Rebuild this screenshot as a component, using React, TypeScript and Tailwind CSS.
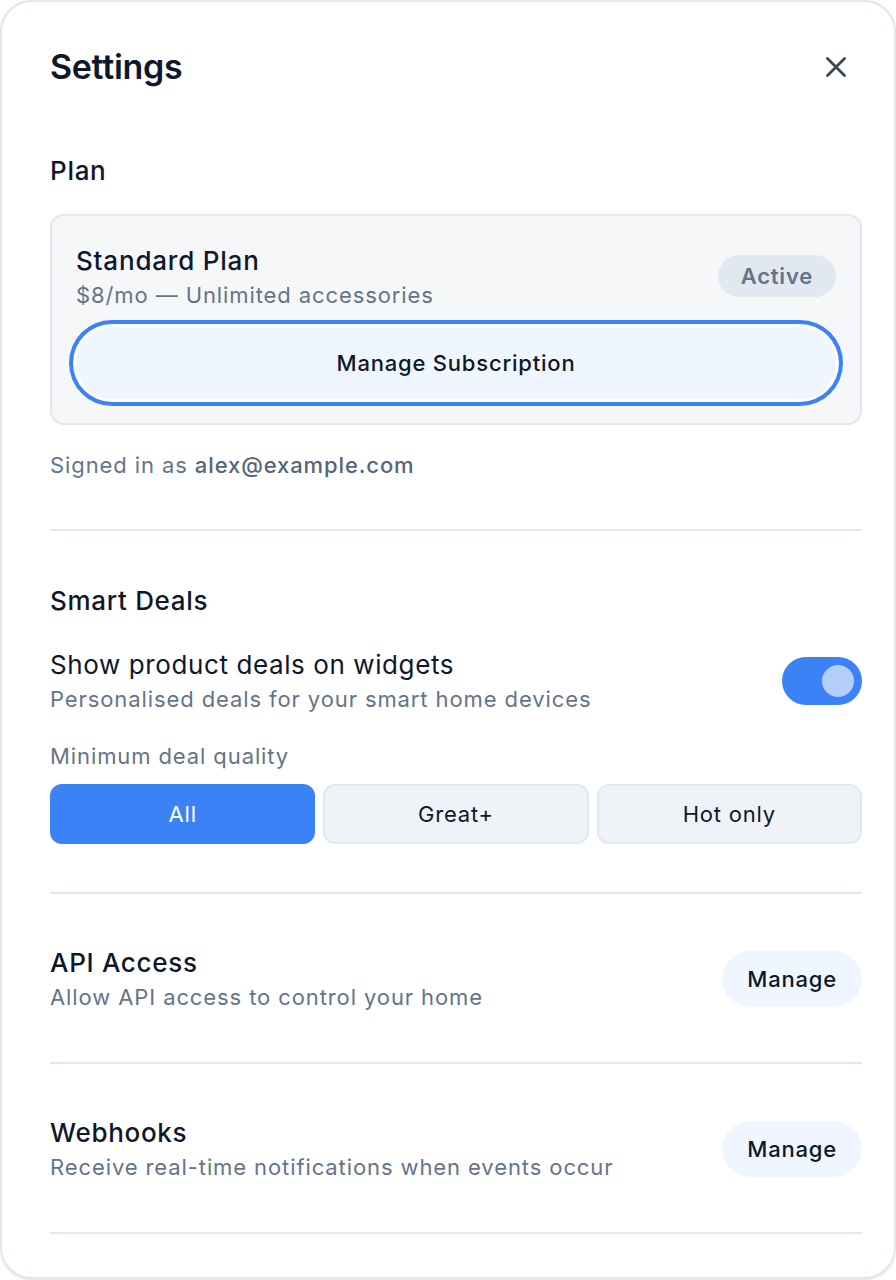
import * as React from "react";

type RowProps = {
  title: string;
  subTitle: string;
  children: React.ReactNode;
};

function SettingRow({ title, subTitle, children }: RowProps) {
  return (
    <div className="flex items-center justify-between">
      <div className="flex flex-col">
        <h3 className="text-[26px] leading-[36px] font-medium tracking-[0.7px] text-[#0f172a]">{title}</h3>
        <p className="text-[22px] leading-[32px] tracking-[0.9px] text-[#64748b]">{subTitle}</p>
      </div>
      {children}
    </div>
  );
}

function Divider({ className }: { className: string }) {
  return <div className={`h-[2px] bg-[#e2e8f0] ${className}`} />;
}

const qualities = ["All", "Great+", "Hot only"];

export default function App() {
  const [quality, setQuality] = React.useState("All");
  const [deals, setDeals] = React.useState(true);

  return (
    <div className="h-[1280px] w-[896px] bg-white font-['Inter',sans-serif]">
      <div className="h-[1279px] w-[896px] rounded-[32px] border-2 border-[#e2e8f0] bg-white pr-[32px] pl-[48px] shadow-sm">
        <div className="mt-[43px] flex h-[44px] items-center justify-between">
          <h1 className="text-[34px] leading-[44px] font-semibold tracking-[-0.3px] text-[#0f172a]">
            Settings
          </h1>
          <button type="button" className="mr-[16px] text-[#3f4654]">
            <svg width="20" height="20" viewBox="0 0 20 20" fill="none">
              <path
                d="M1.5 1.5L18.5 18.5M18.5 1.5L1.5 18.5"
                stroke="currentColor"
                strokeWidth="2.8"
                strokeLinecap="round"
              />
            </svg>
          </button>
        </div>

        <h2 className="mt-[64px] text-[26px] leading-[36px] font-medium tracking-[0.7px] text-[#0f172a]">Plan</h2>

        <div className="mt-[25px] rounded-[14px] border-2 border-[#e2e8f0] bg-[#f6f7f9] px-[24px] pt-[27px] pb-[24px]">
          <div className="flex items-center justify-between">
            <div className="flex flex-col">
              <h3 className="text-[26px] leading-[36px] font-medium tracking-[0.8px] text-[#0f172a]">
                Standard Plan
              </h3>
              <p className="text-[22px] leading-[32px] tracking-[0.9px] text-[#64748b]">
                $8/mo — Unlimited accessories
              </p>
            </div>
            <span className="mb-[3px] rounded-full bg-[#e2e8f0] px-[23px] py-[5px] text-[22px] leading-[32px] font-semibold tracking-[0.8px] text-[#64748b]">
              Active
            </span>
          </div>
          <button
            type="button"
            className="mt-[16px] h-[72px] w-full rounded-full bg-[#eff6ff] text-[22px] font-medium tracking-[0.8px] text-[#0f172a] ring-4 ring-[#3b82f6] ring-offset-[3px] ring-offset-white"
          >
            Manage Subscription
          </button>
        </div>

        <p className="mt-[24px] text-[22px] leading-[32px] tracking-[0.9px] text-[#64748b]">
          Signed in as <span className="font-medium text-[#56657b]">alex@example.com</span>
        </p>

        <Divider className="mt-[48px]" />

        <h2 className="mt-[52px] text-[26px] leading-[36px] font-medium tracking-[0.7px] text-[#0f172a]">
          Smart Deals
        </h2>

        <div className="mt-[28px] flex items-center justify-between">
          <div className="flex flex-col">
            <h3 className="text-[26px] leading-[36px] tracking-[0.6px] text-[#0f172a]">
              Show product deals on widgets
            </h3>
            <p className="text-[22px] leading-[32px] tracking-[0.9px] text-[#64748b]">
              Personalised deals for your smart home devices
            </p>
          </div>
          <button
            type="button"
            onClick={() => setDeals(!deals)}
            className={`flex h-[48px] w-[80px] items-center rounded-full px-[8px] ${
              deals ? "justify-end bg-[#3b82f6]" : "justify-start bg-[#cbd5e1]"
            }`}
          >
            <span className="h-[32px] w-[32px] rounded-full bg-[#b3cefb]" />
          </button>
        </div>

        <p className="mt-[25px] text-[22px] leading-[32px] tracking-[0.9px] text-[#64748b]">
          Minimum deal quality
        </p>

        <div className="mt-[12px] grid grid-cols-3 gap-[8px]">
          {qualities.map((q) => (
            <button
              key={q}
              type="button"
              onClick={() => setQuality(q)}
              className={
                q === quality
                  ? "h-[60px] rounded-[12px] bg-[#3b82f6] text-[22px] tracking-[0.8px] text-white"
                  : "h-[60px] rounded-[12px] border-2 border-[#e2e8f0] bg-[#eff3f8] text-[22px] tracking-[0.8px] text-[#0f172a]"
              }
            >
              {q}
            </button>
          ))}
        </div>

        <Divider className="mt-[48px]" />

        <div className="mt-[51px]">
          <SettingRow title="API Access" subTitle="Allow API access to control your home">
            <button
              type="button"
              className="h-[56px] rounded-full bg-[#eff6ff] px-[25px] text-[22px] font-medium tracking-[0.8px] text-[#0f172a]"
            >
              Manage
            </button>
          </SettingRow>
        </div>

        <Divider className="mt-[49px]" />

        <div className="mt-[51px]">
          <SettingRow title="Webhooks" subTitle="Receive real-time notifications when events occur">
            <button
              type="button"
              className="h-[56px] rounded-full bg-[#eff6ff] px-[25px] text-[22px] font-medium tracking-[0.8px] text-[#0f172a]"
            >
              Manage
            </button>
          </SettingRow>
        </div>

        <Divider className="mt-[49px]" />
      </div>
    </div>
  );
}
